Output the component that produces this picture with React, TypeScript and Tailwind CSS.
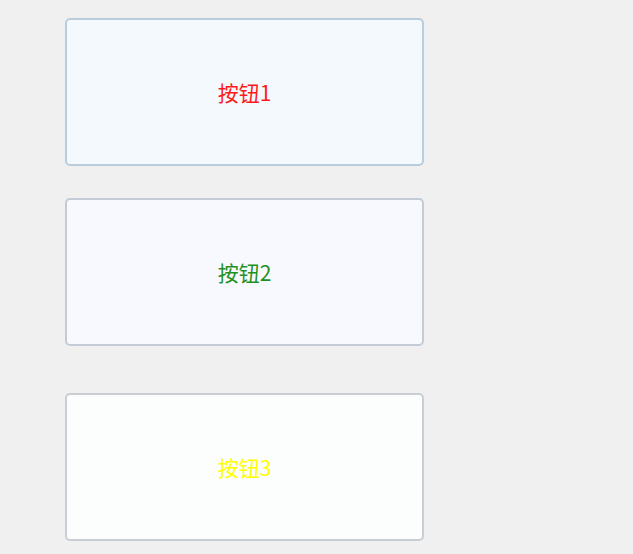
const buttons = [
  { label: "按钮1", text: "text-[#ff1a1a]", bg: "bg-[#f4f9fd]", border: "border-[#b9cddc]", mt: "mt-0" },
  { label: "按钮2", text: "text-[#1f911f]", bg: "bg-[#f8f9fe]", border: "border-[#c3ccd6]", mt: "mt-[32px]" },
  { label: "按钮3", text: "text-[#ffff00]", bg: "bg-[#fbfefc]", border: "border-[#c8ced4]", mt: "mt-[47px]" },
];

export default function App() {
  return (
    <div className="w-[633px] h-[554px] bg-[#f0f0f0] pl-[65px] pt-[18px] font-['Noto_Sans_CJK_SC',sans-serif]">
      {buttons.map((b) => (
        <button
          key={b.label}
          className={`flex items-center justify-center w-[359px] h-[148px] rounded-[5px] border-2 ${b.border} ${b.bg} ${b.mt} ${b.text} text-[21px] leading-none`}
        >
          {b.label}
        </button>
      ))}
    </div>
  );
}
